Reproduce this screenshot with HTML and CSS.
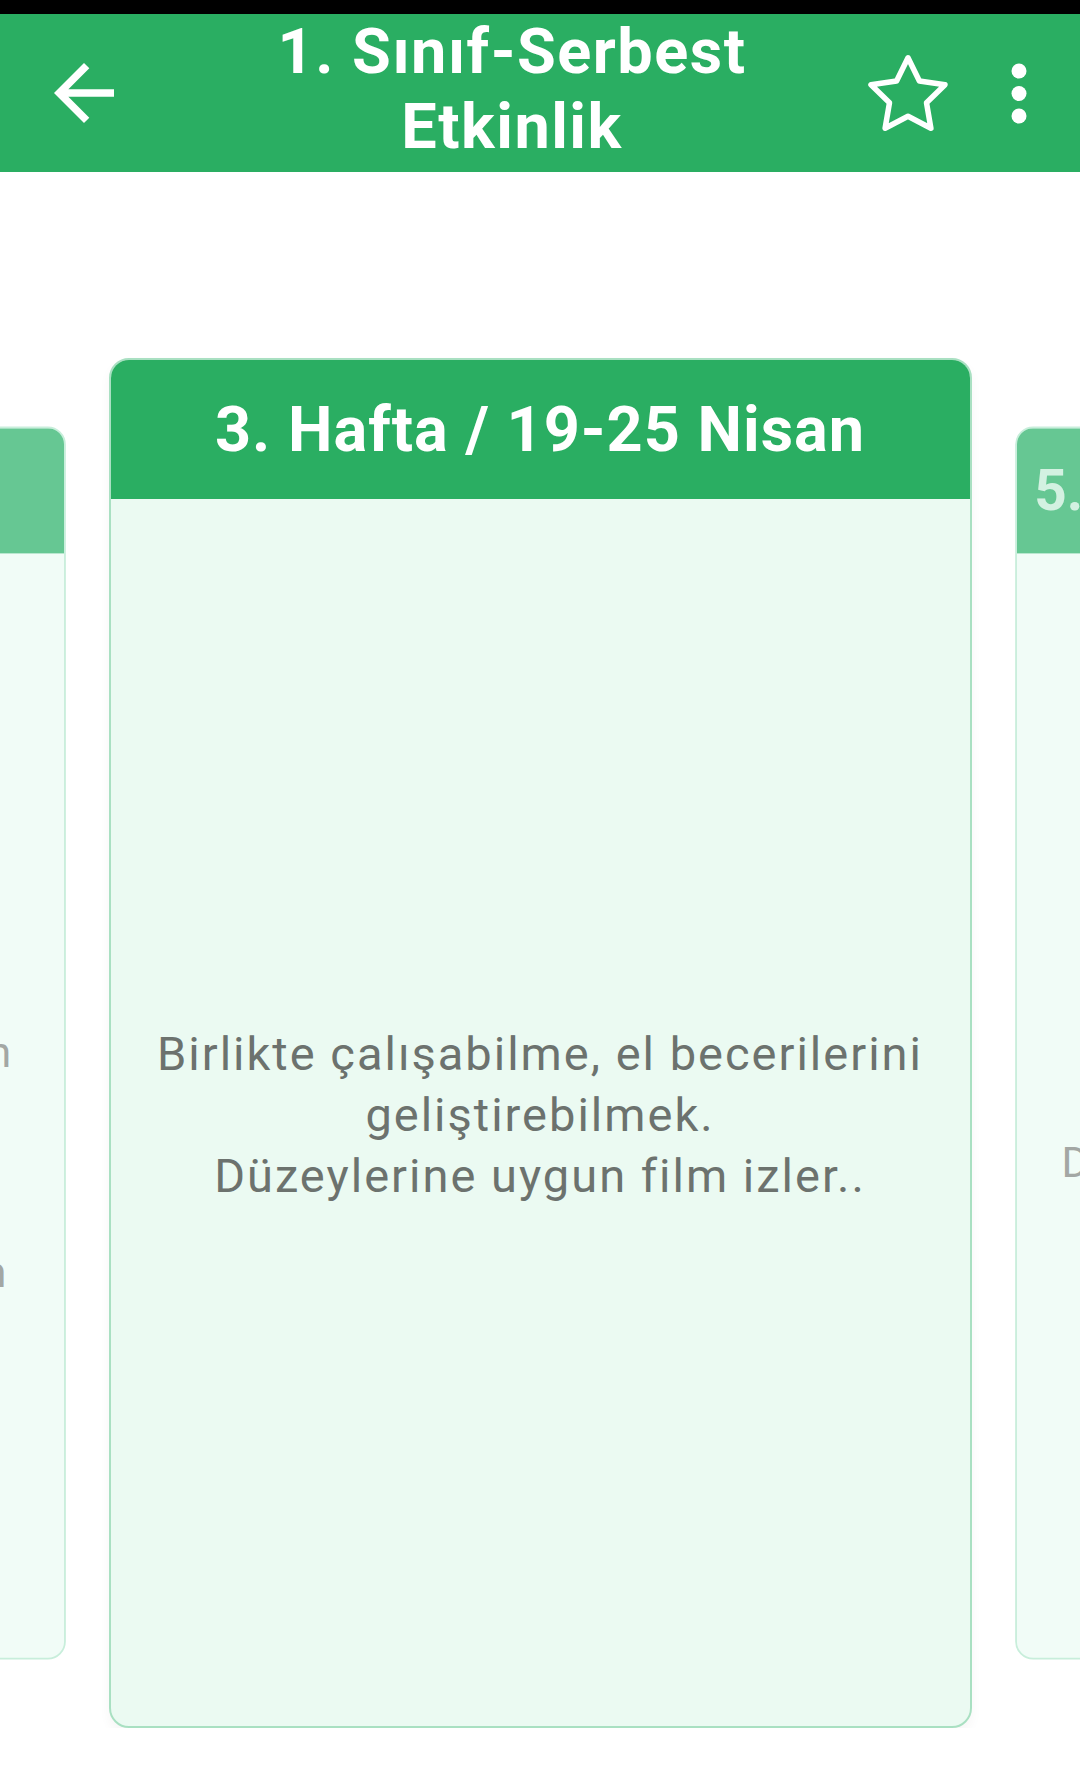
FILE: index.html
```html
<!DOCTYPE html>
<html lang="tr">
<head>
    <meta charset="UTF-8">
    <meta name="viewport" content="width=device-width, initial-scale=1.0">
    <title>1. Sınıf-Serbest Etkinlik</title>
    <link rel="stylesheet" href="styles.css">
</head>
<body>
    <div class="status-bar"></div>

    <header class="app-bar">
        <button class="icon-btn" aria-label="Geri">
            <svg viewBox="0 0 24 24"><path d="M20 11H7.83l5.59-5.59L12 4l-8 8 8 8 1.41-1.41L7.83 13H20v-2z"/></svg>
        </button>
        <h1 class="title">1. Sınıf-Serbest<br>Etkinlik</h1>
        <div class="actions">
            <button class="icon-btn" aria-label="Favori">
                <svg viewBox="0 0 90 90" class="star">
                    <path d="M45 9.8 L56.4 33 L82 36.7 L63.5 54.7 L67.9 80.2 L45 68.2 L22.1 80.2 L26.5 54.7 L8 36.7 L33.6 33 Z"/>
                </svg>
            </button>
            <button class="icon-btn" aria-label="Menü">
                <svg viewBox="0 0 90 90">
                    <circle cx="45" cy="23" r="7.5"/>
                    <circle cx="45" cy="45.5" r="7.5"/>
                    <circle cx="45" cy="68" r="7.5"/>
                </svg>
            </button>
        </div>
    </header>

    <main class="carousel">
        <article class="card side">
            <div class="card-header">2. Hafta / 12-18 Nisan</div>
            <div class="card-body">
                <p>Okul ortamını tanır.<br>
                Arkadaşlarıyla tanışır.<br>
                Okulu ve sınıf kurallarını öğrenen<br>
                Şarkılar söyler.<br>
                Serbest resim yapar.<br>
                Oyun oynar.<br>
                Okulu ve sınıf kurallarını öğreten</p>
            </div>
        </article>

        <article class="card active">
            <div class="card-header">3. Hafta / 19-25 Nisan</div>
            <div class="card-body">
                <p>Birlikte çalışabilme, el becerilerini geliştirebilmek.<br>
                Düzeylerine uygun film izler..</p>
            </div>
        </article>

        <article class="card side">
            <div class="card-header">5. Hafta / 03 Mayıs-09 Mayıs</div>
            <div class="card-body">
                <p>Kendini ifade edebilme,<br>
                hayal gücünü geliştirebilmek.<br>
                Düzeylerine uygun oyunlar oynar..</p>
            </div>
        </article>
    </main>
</body>
</html>
```

FILE: styles.css
```css
* {
    margin: 0;
    padding: 0;
    box-sizing: border-box;
}

body {
    font-family: Roboto, "Noto Sans", sans-serif;
    background: #fff;
    width: 1080px;
    height: 1765px;
    overflow: hidden;
}

.status-bar {
    height: 14px;
    background: #000;
}

.app-bar {
    height: 158px;
    background: #2aae62;
    color: #fff;
    display: flex;
    align-items: center;
    padding: 0 16px 0 39px;
}

.icon-btn {
    width: 90px;
    height: 90px;
    background: none;
    border: none;
    color: #fff;
    display: flex;
    align-items: center;
    justify-content: center;
    flex-shrink: 0;
}

.icon-btn svg {
    width: 90px;
    height: 90px;
    fill: currentColor;
}

.icon-btn svg.star {
    fill: none;
    stroke: currentColor;
    stroke-width: 5.5;
    stroke-linejoin: round;
}

.title {
    flex: 1;
    text-align: center;
    font-size: 63px;
    font-weight: 700;
    line-height: 75px;
    letter-spacing: 1.5px;
    padding-left: 32px;
    margin-bottom: 8px;
}

.actions {
    display: flex;
    align-items: center;
    gap: 21px;
}

.carousel {
    display: flex;
    justify-content: center;
    overflow: hidden;
    padding-top: 186px;
}

.card {
    flex: 0 0 863px;
    height: 1370px;
    border: 2px solid #a9e0c2;
    border-radius: 20px;
    background: #ebfaf2;
    overflow: hidden;
    display: flex;
    flex-direction: column;
    box-shadow: 0 6px 12px rgba(0, 0, 0, 0.04);
}

.card-header {
    height: 139px;
    flex-shrink: 0;
    background: #2aae62;
    color: #fff;
    font-size: 63px;
    font-weight: 700;
    letter-spacing: 1px;
    white-space: nowrap;
    display: flex;
    align-items: center;
    justify-content: center;
}

.card-body {
    flex: 1;
    display: flex;
    align-items: center;
    justify-content: center;
    text-align: center;
    padding: 4px 20px 0;
    font-size: 47px;
    line-height: 61px;
    letter-spacing: 2px;
    color: #6c726e;
}

.card.side {
    transform: scale(0.9);
    border-color: #c8eedb;
    background: #f1fcf7;
    box-shadow: none;
}

.card.side .card-header {
    background: #66c793;
    color: #d3f1e1;
    letter-spacing: 0;
}

.card.side .card-body {
    color: #a3a7a4;
}
```
